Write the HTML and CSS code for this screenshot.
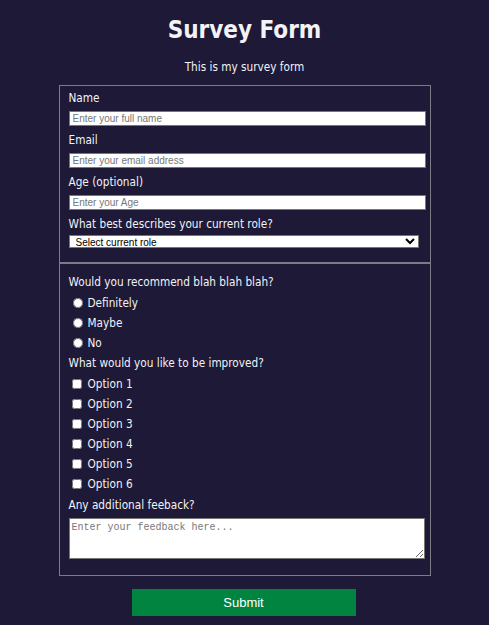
FILE: index.html
```html
<!DOCTYPE html>
<html>
<head>
<meta charset="utf-8">
<link rel="stylesheet" href="styles.css">
</head>
<body>
<h1 class="title">Survey Form</h1>
<p class="desc">This is my survey form</p>
<form class="survey">
  <fieldset class="group">
    <label class="lbl">Name</label>
    <input class="field" type="text" placeholder="Enter your full name">
    <label class="lbl">Email</label>
    <input class="field" type="email" placeholder="Enter your email address">
    <label class="lbl">Age (optional)</label>
    <input class="field" type="number" placeholder="Enter your Age">
    <label class="lbl lbl-tight">What best describes your current role?</label>
    <select class="dropdown"><option>Select current role</option></select>
  </fieldset>
  <fieldset class="group group2">
    <label class="lbl">Would you recommend blah blah blah?</label>
    <label class="choice"><input type="radio" name="r" class="mark radio"> Definitely</label>
    <label class="choice"><input type="radio" name="r" class="mark radio"> Maybe</label>
    <label class="choice"><input type="radio" name="r" class="mark radio"> No</label>
    <label class="lbl">What would you like to be improved?</label>
    <label class="choice"><input type="checkbox" class="mark"> Option 1</label>
    <label class="choice"><input type="checkbox" class="mark"> Option 2</label>
    <label class="choice"><input type="checkbox" class="mark"> Option 3</label>
    <label class="choice"><input type="checkbox" class="mark"> Option 4</label>
    <label class="choice"><input type="checkbox" class="mark"> Option 5</label>
    <label class="choice last"><input type="checkbox" class="mark"> Option 6</label>
    <label class="lbl">Any additional feeback?</label>
    <textarea class="feedback" placeholder="Enter your feedback here..."></textarea>
  </fieldset>
  <div class="actions"><button type="button" class="submit">Submit</button></div>
</form>
</body>
</html>
```
FILE: styles.css
```css
html, body {
  margin: 0;
  padding: 0;
  background: #1d1936;
  color: #f2f2f7;
  font-family: "DejaVu Sans Condensed", "DejaVu Sans", sans-serif;
  font-size: 11.7px;
}
.title {
  margin: 0;
  padding-top: 15px;
  text-align: center;
  font-size: 24px;
  font-weight: bold;
  line-height: 30px;
}
.desc {
  margin: 0;
  padding-top: 14px;
  text-align: center;
  font-size: 11.7px;
  line-height: 16px;
}
.survey {
  width: 372px;
  margin: 10px auto 0;
}
.group {
  box-sizing: border-box;
  width: 372px;
  min-width: 0;
  margin: 0;
  border: 1px solid #7d7b86;
  padding: 4px 9px 14px 9px;
  display: flex;
  flex-direction: column;
  align-items: flex-start;
}
.group2 {
  border-top-width: 2px;
  margin-top: -1px;
  padding-top: 10px;
  padding-bottom: 16px;
}
.lbl {
  display: block;
  line-height: 16px;
  margin: 0 0 5px;
  white-space: nowrap;
}
.lbl-tight { margin-bottom: 3px; }
.field {
  box-sizing: border-box;
  flex: none;
  width: 357px;
  height: 15px;
  margin: 0 0 6px;
  padding: 0 3px;
  border: 1px solid #767676;
  background: #fff;
  font-family: "Liberation Sans", Arial, sans-serif;
  font-size: 10px;
  color: #000;
}
.field::placeholder { color: #777; }
.dropdown {
  box-sizing: border-box;
  width: 350px;
  height: 13px;
  margin: 0;
  padding: 0 2px;
  border: 1px solid #767676;
  border-radius: 0;
  background: #fff;
  color: #000;
  font-family: "Liberation Sans", Arial, sans-serif;
  font-size: 10px;
  line-height: 11px;
}
.choice {
  display: flex;
  align-items: center;
  line-height: 16px;
  margin: 0 0 4px 3px;
  gap: 4px;
}
.choice.last { margin-bottom: 5px; }
.mark {
  margin: 0 2px 0 0;
  width: 10px;
  height: 10px;
}
.radio { margin-left: 1px; margin-right: 1px; }
.feedback {
  box-sizing: border-box;
  flex: none;
  width: 356px;
  height: 41px;
  margin: 0;
  padding: 3px 2px;
  border: 1px solid #767676;
  background: #fff;
  font-family: "Liberation Mono", monospace;
  font-size: 10px;
  resize: both;
}
.feedback::placeholder { color: #777; }
.actions {
  display: flex;
  justify-content: center;
  padding-top: 13px;
}
.submit {
  width: 224px;
  height: 27px;
  border: none;
  background: #00843f;
  color: #fff;
  font-family: "Liberation Sans", Arial, sans-serif;
  font-size: 13px;
  margin-left: -2px;
}
```
